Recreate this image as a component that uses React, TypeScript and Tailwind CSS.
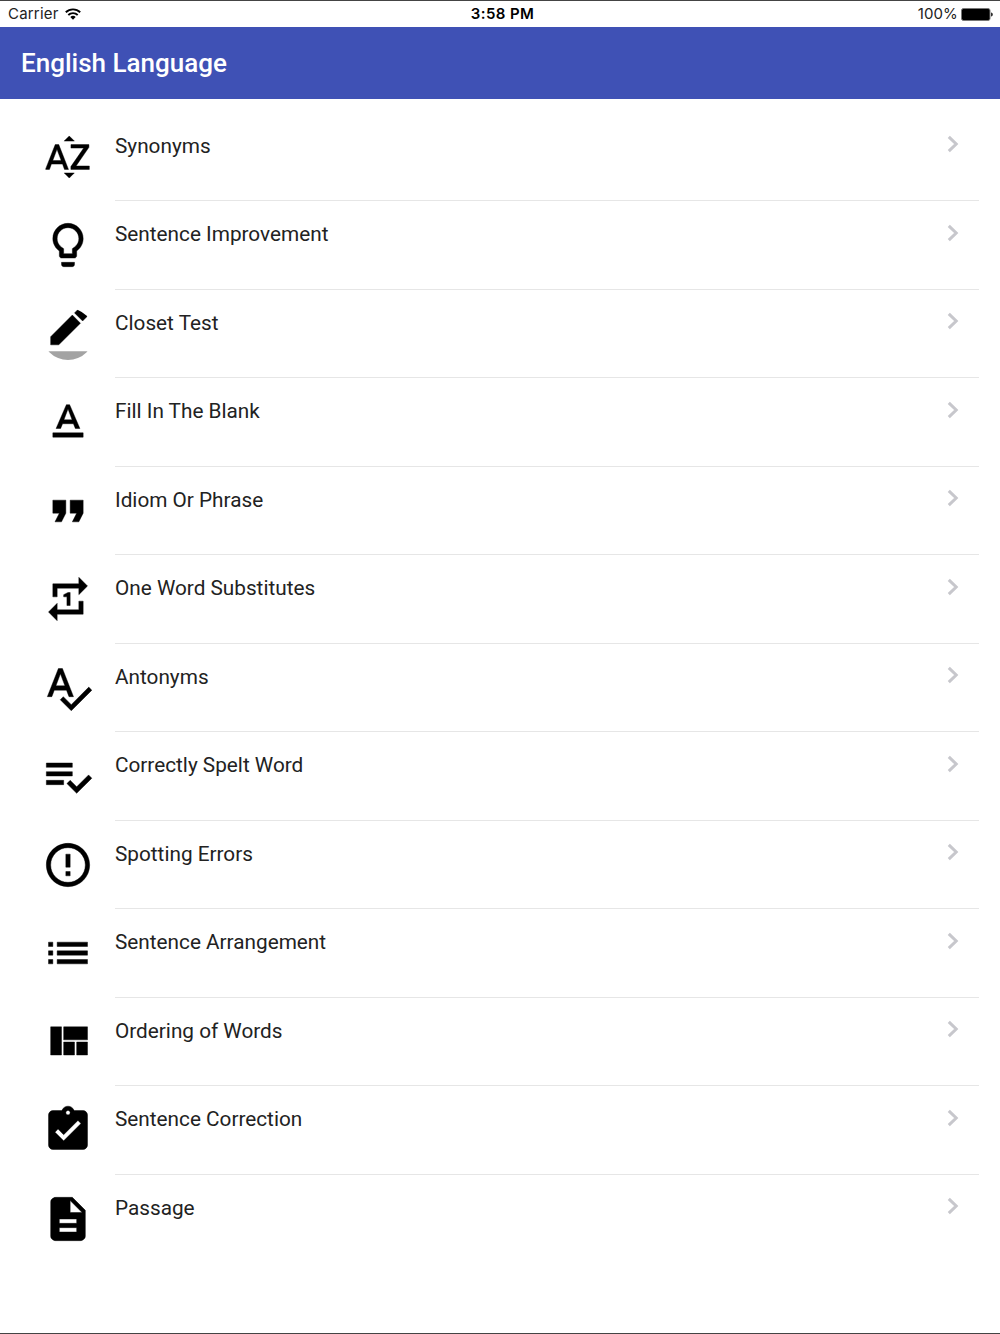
import React from 'react'
import {
  MdSortByAlpha,
  MdLightbulbOutline,
  MdTextFormat,
  MdFormatQuote,
  MdRepeatOne,
  MdSpellcheck,
  MdErrorOutline,
  MdAssignmentTurnedIn,
  MdDescription,
} from 'react-icons/md'

type IconProps = { className?: string }

const BorderColorIcon = ({ className }: IconProps) => (
  <svg className={className} viewBox="0 0 24 24" fill="currentColor">
    <path d="M17.75 7L14 3.25l-10 10V17h3.75l10-10zm2.96-2.96c.39-.39.39-1.02 0-1.41L18.37.29c-.39-.39-1.02-.39-1.41 0L15 2.25 18.75 6l1.96-1.96z" />
    <path fillOpacity=".36" stroke="none" d="M0 20h24v4H0z" />
  </svg>
)

const PlaylistCheckIcon = ({ className }: IconProps) => (
  <svg className={className} viewBox="0 0 24 24" fill="currentColor">
    <path d="M14 10H2v2h12v-2zm0-4H2v2h12V6zM2 16h8v-2H2v2zm19.5-4.5L23 13l-6.99 7-4.51-4.5L13 14l3.01 3 5.49-5.5z" />
  </svg>
)

const ListIcon = ({ className }: IconProps) => (
  <svg className={className} viewBox="0 0 24 24" fill="currentColor">
    <path d="M3 13h2v-2H3v2zm0 4h2v-2H3v2zm0-8h2V7H3v2zm4 4h14v-2H7v2zm0 4h14v-2H7v2zM7 7v2h14V7H7z" />
  </svg>
)

const QuiltIcon = ({ className }: IconProps) => (
  <svg className={className} viewBox="0 0 24 24" fill="currentColor">
    <path d="M10 18h5v-6h-5v6zm-6 0h5V5H4v13zm12 0h5v-6h-5v6zM10 5v6h11V5H10z" />
  </svg>
)

const topics = [
  { title: 'Synonyms', Icon: MdSortByAlpha },
  { title: 'Sentence Improvement', Icon: MdLightbulbOutline },
  { title: 'Closet Test', Icon: BorderColorIcon },
  { title: 'Fill In The Blank', Icon: MdTextFormat },
  { title: 'Idiom Or Phrase', Icon: MdFormatQuote },
  { title: 'One Word Substitutes', Icon: MdRepeatOne },
  { title: 'Antonyms', Icon: MdSpellcheck },
  { title: 'Correctly Spelt Word', Icon: PlaylistCheckIcon },
  { title: 'Spotting Errors', Icon: MdErrorOutline },
  { title: 'Sentence Arrangement', Icon: ListIcon },
  { title: 'Ordering of Words', Icon: QuiltIcon },
  { title: 'Sentence Correction', Icon: MdAssignmentTurnedIn },
  { title: 'Passage', Icon: MdDescription },
]

function StatusBar() {
  return (
    <div className="grid h-[26px] grid-cols-3 items-center pl-2 pr-[7px] font-['Inter',sans-serif] text-[15px] leading-[26px] text-[#222]">
      <div className="flex items-center gap-[6px]">
        <span className="tracking-[0.2px]">Carrier</span>
        <svg className="h-3 w-4" viewBox="0 0 16 12" fill="none" stroke="#000" strokeWidth="1.9">
          <path d="M.8 4.3a10.4 10.4 0 0 1 14.4 0" />
          <path d="M3.3 7a6.8 6.8 0 0 1 9.4 0" />
          <path d="M8 11.8L5.3 9.1a3.9 3.9 0 0 1 5.4 0z" fill="#000" stroke="none" />
        </svg>
      </div>
      <div className="pl-[4px] text-center font-semibold tracking-[0.4px] text-black">3:58 PM</div>
      <div className="flex items-center justify-end gap-[3px]">
        <span className="tracking-[0.15px]">100%</span>
        <svg className="h-[13px] w-8" viewBox="0 0 32 13">
          <rect x=".5" y=".5" width="28.5" height="12" rx="2" fill="#000" stroke="#777" />
          <path d="M30.2 4.5c2 .4 2 3.6 0 4z" fill="#000" />
        </svg>
      </div>
    </div>
  )
}

export default function App() {
  return (
    <div className="flex h-[1334px] w-[1000px] flex-col overflow-hidden border-y border-[#444] bg-white font-['Roboto',sans-serif]">
      <StatusBar />
      <header className="flex h-[72.4px] shrink-0 items-center bg-[#3f51b5] pl-[21px]">
        <h1 className="text-[26px] font-medium leading-none text-white">English Language</h1>
      </header>
      <ul className="pt-[13.2px]">
        {topics.map(({ title, Icon }, i) => (
          <li key={title} className="flex h-[88.5px] items-start pl-[42px] pr-[21px]">
            <div className="mt-[18.4px] h-[52px] w-[52px] shrink-0 overflow-hidden rounded-full text-black">
              <Icon className="h-full w-full stroke-black stroke-[0.2] [&_path[fill=none]]:stroke-none" />
            </div>
            <div className={`ml-[21px] flex h-full flex-1 items-start justify-between pr-5 pt-5 ${i < topics.length - 1 ? 'border-b border-[#e6e6e6]' : ''}`}>
              <span className="pt-[0.2px] text-[20.75px] leading-[27px] text-[#222]">{title}</span>
              <svg className="mt-[2.6px] h-[18px] w-3" viewBox="0 0 12 18" fill="none" stroke="#c7c7cc" strokeWidth="3">
                <path d="M1.8 1.8L9.2 9l-7.4 7.2" />
              </svg>
            </div>
          </li>
        ))}
      </ul>
    </div>
  )
}
